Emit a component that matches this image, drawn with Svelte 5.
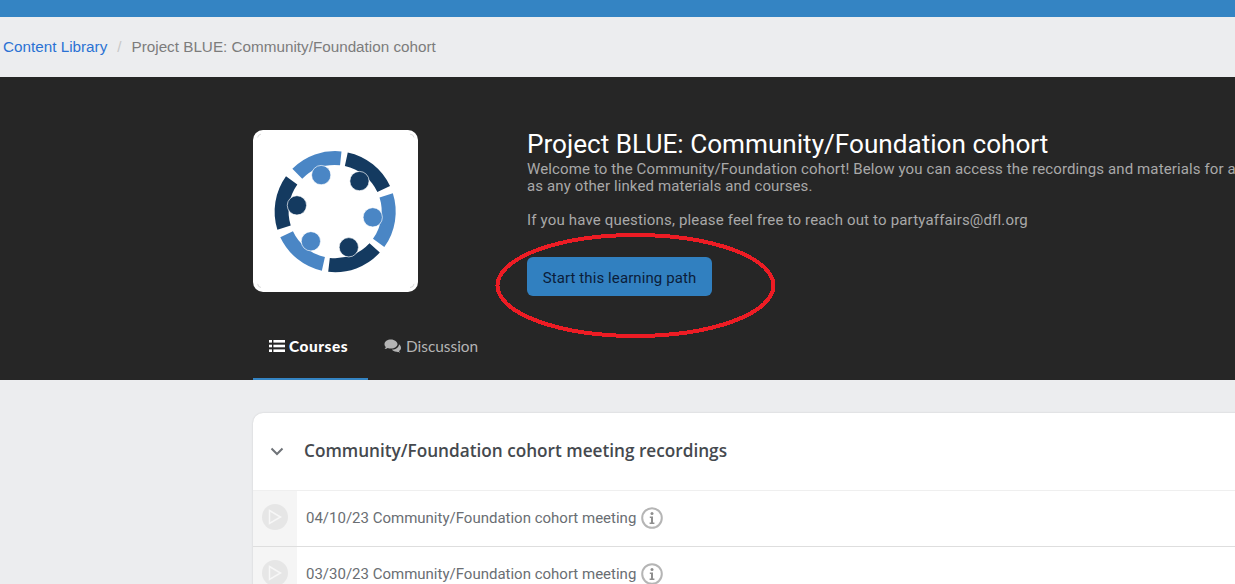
<script lang="ts">
	const cx = 285;
	const cy = 275;
	const r = 161;

	// arcs of the logo, angles in degrees from the centre (y down)
	function arc(from: number, to: number) {
		const a = (from * Math.PI) / 180;
		const b = (to * Math.PI) / 180;
		const x1 = cx + r * Math.cos(a);
		const y1 = cy + r * Math.sin(a);
		const x2 = cx + r * Math.cos(b);
		const y2 = cy + r * Math.sin(b);
		return `M ${x1} ${y1} A ${r} ${r} 0 0 1 ${x2} ${y2}`;
	}

	const arcs = [
		{ d: arc(-135, -84), color: '#4a86c5' },
		{ d: arc(-78, -25), color: '#143a60' },
		{ d: arc(-17.7, 35.7), color: '#4a86c5' },
		{ d: arc(42.5, 96.6), color: '#143a60' },
		{ d: arc(102.7, 155), color: '#4a86c5' },
		{ d: arc(162.6, 215.7), color: '#143a60' }
	];
	const heads = [
		{ x: 243, y: 165, color: '#4a86c5' },
		{ x: 358, y: 183, color: '#143a60' },
		{ x: 398, y: 292, color: '#4a86c5' },
		{ x: 326, y: 382, color: '#143a60' },
		{ x: 212, y: 364, color: '#4a86c5' },
		{ x: 170, y: 256, color: '#143a60' }
	];
	const rows = [
		'04/10/23 Community/Foundation cohort meeting',
		'03/30/23 Community/Foundation cohort meeting'
	];
</script>

<div class="page">
	<div class="topbar"></div>

	<nav class="breadcrumb">
		<a href="#library">Content Library</a>
		<span class="sep">/</span>
		<span class="current">Project BLUE: Community/Foundation cohort</span>
	</nav>

	<section class="hero">
		<div class="hero-main">
			<div class="logo">
				<svg viewBox="38 30 496 486" width="165" height="162">
					{#each arcs as a}
						<path d={a.d} fill="none" stroke={a.color} stroke-width="42" />
					{/each}
					{#each heads as head}
						<circle cx={head.x} cy={head.y} r="29" fill={head.color} stroke="#fff" stroke-width="2" />
					{/each}
					<g fill="none" stroke="#c9c9c9" stroke-width="2">
						<path d="M 52 52 A 12 12 0 0 1 62 42" />
						<path d="M 510 42 A 12 12 0 0 1 522 52" />
						<path d="M 52 492 A 12 12 0 0 0 62 503" />
						<path d="M 510 503 A 12 12 0 0 0 522 492" />
					</g>
				</svg>
			</div>
			<div class="info">
				<h1>Project BLUE: Community/Foundation cohort</h1>
				<p>
					Welcome to the Community/Foundation cohort! Below you can access the recordings and materials for a<br />as any other linked materials and courses.
				</p>
				<p class="contact">If you have questions, please feel free to reach out to partyaffairs@dfl.org</p>
				<button type="button" class="start">Start this learning path</button>
			</div>
		</div>

		<div class="tabs">
			<div class="tab active">
				<svg viewBox="0 0 16 14" width="16" height="14" fill="currentColor">
					<rect x="0" y="1" width="3" height="2.6" />
					<rect x="0" y="5.7" width="3" height="2.6" />
					<rect x="0" y="10.4" width="3" height="2.6" />
					<rect x="4.4" y="1" width="11.6" height="2.6" />
					<rect x="4.4" y="5.7" width="11.6" height="2.6" />
					<rect x="4.4" y="10.4" width="11.6" height="2.6" />
				</svg>
				Courses
			</div>
			<div class="tab">
				<svg viewBox="0 0 18 14" width="18" height="14" fill="currentColor">
					<path d="M7 0.5C3.4 0.5 0.5 2.6 0.5 5.2c0 1.1 0.5 2.1 1.400 2.900-0.300 0.800-0.900 1.400-1.300 1.900 1.200-0.100 2.300-0.500 3.100-1.100 1 0.400 2.100 0.600 3.300 0.600 3.600 0 6.500-2.100 6.500-4.300S10.600 0.500 7 0.500z" />
					<path d="M15 5.200c0.100 3-3.200 5.300-7 5.400 0.900 1.500 2.800 2.300 4.900 2.100 0.800 0.500 1.800 0.900 3.300 1-0.500-0.500-1-1.200-1.200-1.800 1.200-0.700 2-1.800 2-3 0-1.600-1-2.900-2-3.700z" />
				</svg>
				Discussion
			</div>
		</div>

		<svg class="annotation" width="283" height="107" viewBox="0 0 283 107">
			<ellipse cx="140.500" cy="53.500" rx="138" ry="50.500" fill="none" stroke="#ed1c24" stroke-width="4" shape-rendering="crispEdges" />
		</svg>
	</section>

	<main class="content">
		<div class="card">
			<div class="card-head">
				<svg class="chevron" viewBox="0 0 14 9" width="14" height="9">
					<path d="M1.500 1.500L7 7l5.500-5.500" fill="none" stroke="#6f7378" stroke-width="2" />
				</svg>
				<h2>Community/Foundation cohort meeting recordings</h2>
			</div>
			{#each rows as row}
				<div class="row">
					<div class="play-cell">
						<span class="play">
							<svg viewBox="0 0 14 16" width="14" height="16">
								<path d="M1.500 1.500L12.500 8 1.500 14.500z" fill="none" stroke="#f7f7f7" stroke-width="1.500" />
							</svg>
						</span>
					</div>
					<span class="title">{row}</span>
					<svg class="info-icon" viewBox="0 0 22 22" width="22" height="22">
						<circle cx="11" cy="11" r="9.800" fill="none" stroke="#b5b5b5" stroke-width="2" />
						<circle cx="11" cy="6.500" r="1.500" fill="#8e8e8e" />
						<path d="M8.800 9.500h3.200v6h1.400v1.500H8.600v-1.500h1.400v-4.500H8.800z" fill="#8e8e8e" />
					</svg>
				</div>
			{/each}
		</div>
	</main>
</div>

<style>
	:global(body) {
		margin: 0;
		background: #ecedef;
		overflow: hidden;
	}

	.page {
		height: 584px;
		overflow: hidden;
		font-family: 'Open Sans', sans-serif;
	}

	.topbar {
		height: 17px;
		background: #3484c3;
	}

	.breadcrumb {
		height: 60px;
		box-sizing: border-box;
		padding: 0 0 2px 3px;
		display: flex;
		align-items: center;
		font-family: 'Liberation Sans', sans-serif;
		font-size: 15.25px;
		color: #7c7c7c;
		white-space: nowrap;
	}

	.breadcrumb a {
		color: #2a72d4;
		text-decoration: none;
	}

	.sep {
		color: #c8c8c8;
		margin: 0 10px;
	}

	.hero {
		position: relative;
		height: 303px;
		background: #262626;
		padding-left: 253px;
		display: flex;
		flex-direction: column;
		justify-content: space-between;
		box-sizing: border-box;
	}

	.hero-main {
		display: flex;
		padding-top: 53px;
		gap: 109px;
	}

	.logo {
		width: 165px;
		height: 162px;
		background: #fff;
		border-radius: 10px;
		flex-shrink: 0;
	}

	.logo svg {
		display: block;
	}

	.info {
		white-space: nowrap;
		font-family: 'Roboto', sans-serif;
		color: #a9a9a9;
		font-size: 15px;
		letter-spacing: 0.12px;
		line-height: 17px;
	}

	h1 {
		margin: 0;
		color: #fff;
		font-size: 26.15px;
		font-weight: 400;
		letter-spacing: 0;
		line-height: 28px;
	}

	.info p {
		margin: 3px 0 -3px;
	}

	.info .contact {
		margin-top: 20px;
		letter-spacing: 0.17px;
	}

	.start {
		display: block;
		margin-top: 31px;
		height: 39px;
		width: 185px;
		padding: 2px 0 0;
		border: none;
		border-radius: 6px;
		background: #3180c0;
		color: #0b1d3a;
		font-family: 'Roboto', sans-serif;
		font-size: 15px;
		letter-spacing: 0.1px;
	}

	.tabs {
		display: flex;
		font-family: 'Lato', sans-serif;
		font-size: 15.4px;
	}

	.tab {
		display: flex;
		align-items: center;
		gap: 4px;
		height: 66px;
		box-sizing: border-box;
		padding: 0 16px;
		color: #b4b4b4;
		border-bottom: 2px solid transparent;
	}

	.tab.active {
		color: #fff;
		font-weight: 900;
		letter-spacing: 0.55px;
		border-bottom-color: #3484c3;
		width: 115px;
	}

	.annotation {
		position: absolute;
		left: 495px;
		top: 155px;
	}

	.content {
		padding: 33px 0 0 253px;
	}

	.card {
		width: 1100px;
		background: #fff;
		border-radius: 10px;
		box-shadow: 0 0 2px rgba(0, 0, 0, 0.15);
		overflow: hidden;
	}

	.card-head {
		height: 78px;
		display: flex;
		align-items: flex-start;
		padding: 24px 0 0 17px;
		gap: 20px;
		box-sizing: border-box;
		border-bottom: 1px solid #efefef;
	}

	.chevron {
		margin-top: 10px;
	}

	h2 {
		margin: 0;
		font-size: 17.2px;
		font-weight: 600;
		line-height: 28px;
		color: #45494e;
	}

	.row {
		display: flex;
		align-items: center;
		height: 56px;
		box-sizing: border-box;
		border-bottom: 1px solid #dedede;
		font-size: 15px;
		color: #6a6e73;
	}

	.play-cell {
		width: 44px;
		height: 100%;
		background: #f5f5f5;
		display: flex;
		align-items: center;
		justify-content: center;
	}

	.play {
		width: 26px;
		height: 26px;
		margin-bottom: 3px;
		border-radius: 50%;
		background: #e6e6e6;
		display: flex;
		align-items: center;
		justify-content: center;
	}

	.title {
		margin: 0 0 2px 9px;
		font-family: 'Roboto', sans-serif;
	}

	.info-icon {
		margin: 0 0 2px 5px;
	}
</style>
